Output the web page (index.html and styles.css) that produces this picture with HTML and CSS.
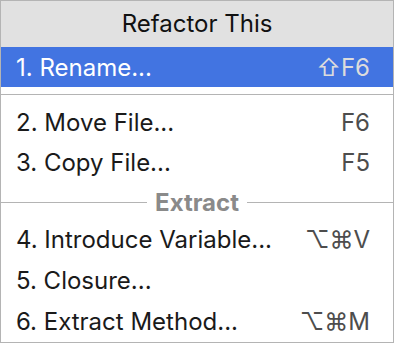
FILE: index.html
```html
<!DOCTYPE html>
<html lang="en">
<head>
    <meta charset="UTF-8">
    <title>Refactor This</title>
    <link rel="stylesheet" href="styles.css">
</head>
<body>
    <div class="popup">
        <div class="popup-title">Refactor This</div>

        <div class="item selected">
            <span class="label">1. Rename...</span>
            <span class="shortcut">⇧F6</span>
        </div>

        <div class="separator"></div>

        <div class="item">
            <span class="label">2. Move File...</span>
            <span class="shortcut">F6</span>
        </div>
        <div class="item">
            <span class="label">3. Copy File...</span>
            <span class="shortcut">F5</span>
        </div>

        <div class="group-title"><span>Extract</span></div>

        <div class="item tall">
            <span class="label">4. Introduce Variable...</span>
            <span class="shortcut">⌥⌘V</span>
        </div>
        <div class="item tall">
            <span class="label">5. Closure...</span>
            <span class="shortcut"></span>
        </div>
        <div class="item tall">
            <span class="label">6. Extract Method...</span>
            <span class="shortcut">⌥⌘M</span>
        </div>
    </div>
</body>
</html>
```

FILE: styles.css
```css
* {
    box-sizing: border-box;
    margin: 0;
    padding: 0;
}

body {
    font-family: Inter, 'DejaVu Sans', sans-serif;
    background: #ffffff;
    color: #1a1a1a;
}

.popup {
    width: 394px;
    height: 343px;
    border: 1px solid #b4b4b4;
    background: #ffffff;
    overflow: hidden;
}

.popup-title {
    height: 46px;
    line-height: 46px;
    background: #e1e1e1;
    text-align: center;
    font-size: 24px;
    color: #111;
}

.item {
    display: flex;
    justify-content: space-between;
    align-items: center;
    height: 40px;
    padding: 0 23px 0 15px;
    font-size: 24px;
}

.item.tall {
    height: 41px;
}

.item .shortcut {
    color: #4d4d4d;
}

.item.selected {
    background: #4274e1;
    color: #ffffff;
}

.item.selected .shortcut {
    color: #dcdcdc;
}

.separator {
    height: 15px;
    padding: 7px 0;
}

.separator::after {
    content: "";
    display: block;
    height: 1px;
    background: #b4b4b4;
}

.group-title {
    display: flex;
    align-items: center;
    gap: 8px;
    height: 37px;
    padding-top: 4px;
    font-size: 24px;
    font-weight: bold;
    color: #8a8a8a;
}

.group-title::before,
.group-title::after {
    content: "";
    flex: 1;
    height: 1px;
    background: #b4b4b4;
}
```
